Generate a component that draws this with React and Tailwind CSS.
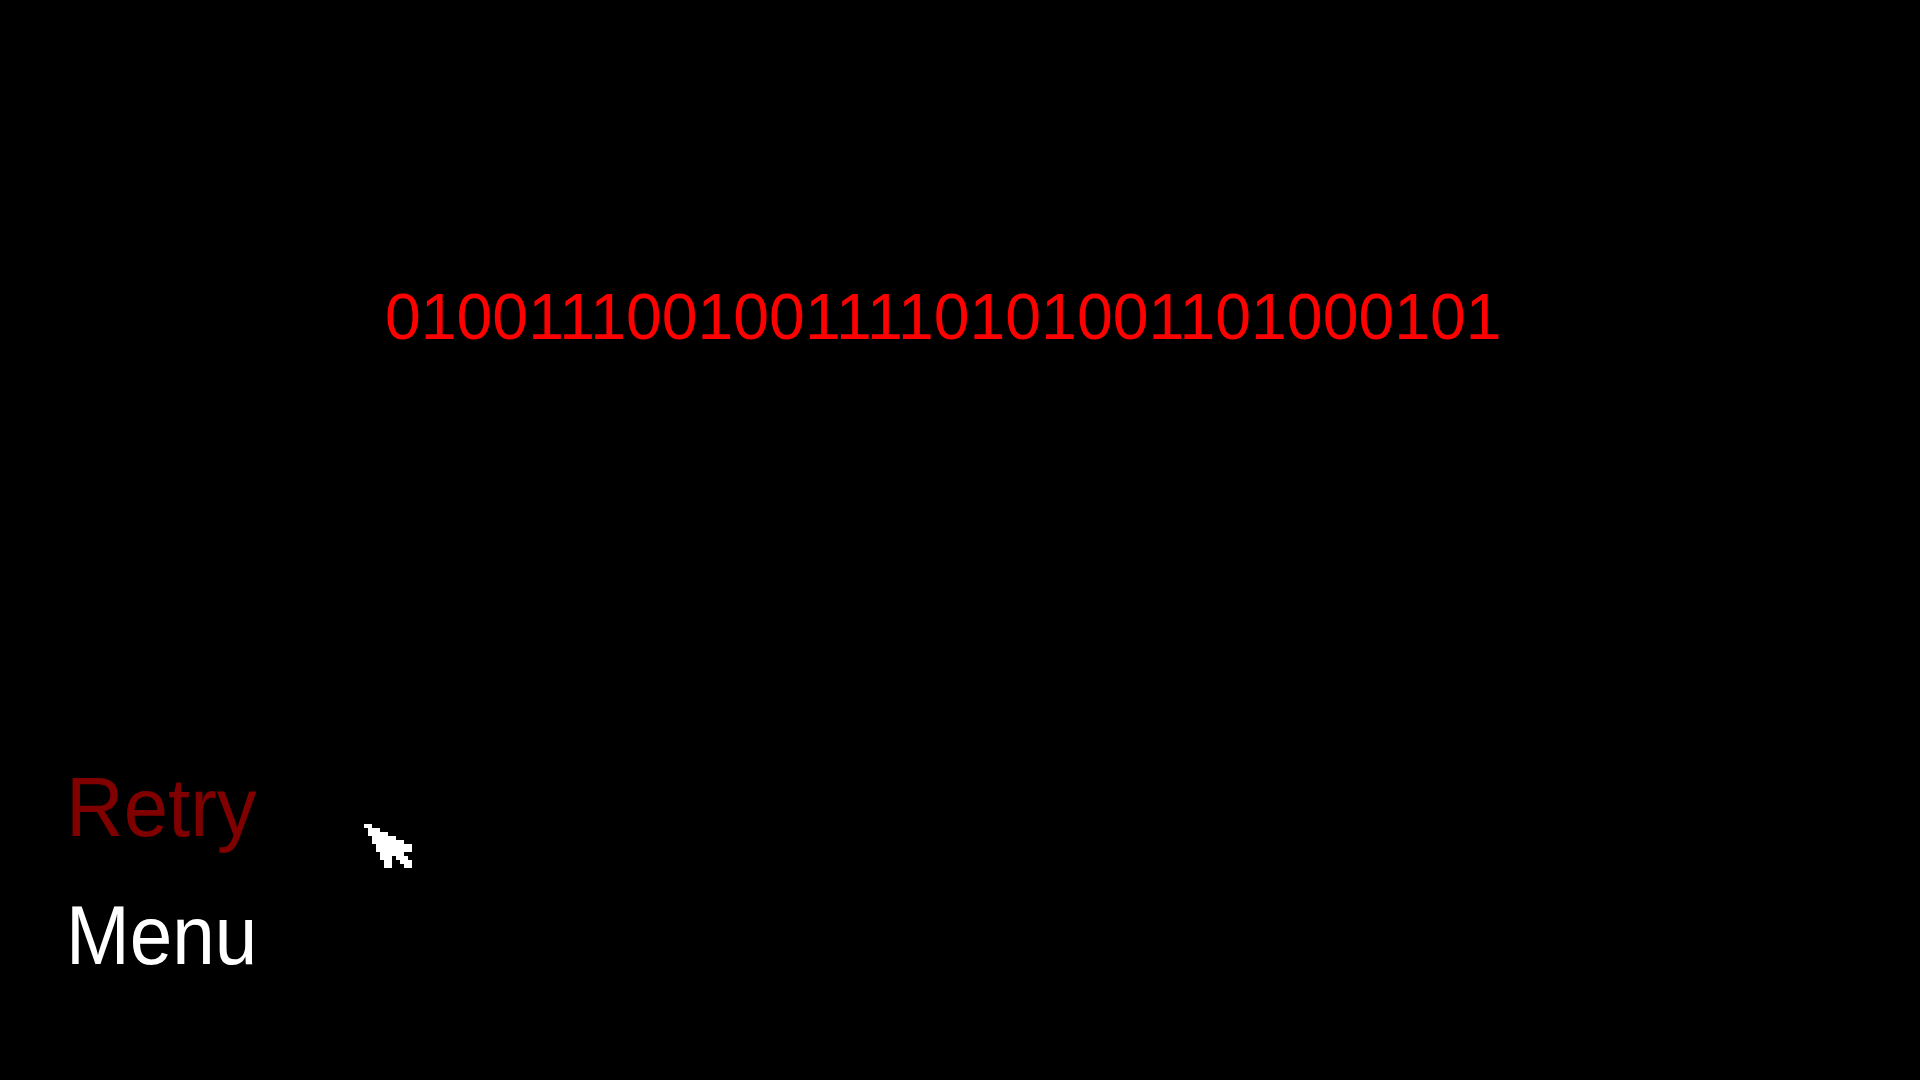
import React from "react"

const BITS = "01001110010011110101001101000101"

// pixel cursor rows: [start, end] cell ranges on a 4px grid
const CURSOR_ROWS = [
  [[0, 1]],
  [[1, 3]],
  [[1, 5]],
  [[2, 7]],
  [[2, 9]],
  [[3, 11]],
  [[3, 11]],
  [[4, 9]],
  [[4, 6], [8, 10]],
  [[5, 6], [9, 11]],
  [[5, 6], [10, 11]],
]

function PixelCursor() {
  return (
    <svg width="48" height="48" viewBox="0 0 48 48" shapeRendering="crispEdges">
      {CURSOR_ROWS.map((spans, r) =>
        spans.map(([a, b], i) => (
          <rect key={`${r}-${i}`} x={a * 4} y={r * 4} width={(b - a + 1) * 4} height="4" fill="#fff" />
        ))
      )}
    </svg>
  )
}

export default function App() {
  return (
    <div className="relative h-screen w-full overflow-hidden bg-black font-['Liberation_Sans',Arial,sans-serif]">
      {/* Binary string */}
      <div className="h-[362px] pt-[284px] pl-[385px]">
        <span className="inline-block origin-left scale-x-[0.99] whitespace-nowrap text-[65px] leading-none text-[#ff0000]">
          {BITS}
        </span>
      </div>

      {/* Options */}
      <div className="mt-[403px] flex flex-col items-start gap-[44px] pl-[66px]">
        <span className="inline-block origin-left scale-x-[0.95] text-[84px] leading-none text-[#800000]">Retry</span>
        <span className="inline-block origin-left scale-x-[0.91] text-[84px] leading-none text-white">Menu</span>
      </div>

      {/* Mouse cursor */}
      <div className="absolute left-[364px] top-[824px]">
        <PixelCursor />
      </div>
    </div>
  )
}
